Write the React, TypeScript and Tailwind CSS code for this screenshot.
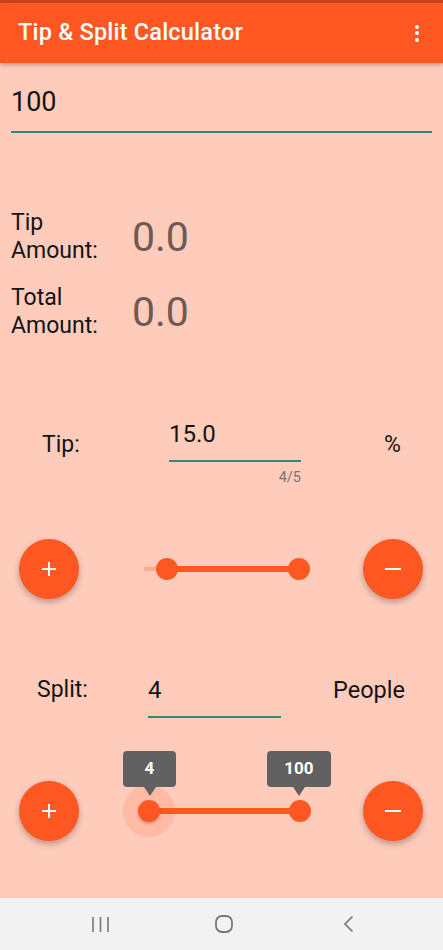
import React from "react";

function Fab({ kind }: { kind: "plus" | "minus" }) {
  return (
    <div className="w-[60px] h-[60px] rounded-full bg-[#ff5722] flex items-center justify-center shadow-[0_3px_6px_rgba(0,0,0,0.28)] shrink-0">
      <svg width="18" height="18" viewBox="0 0 18 18">
        {kind === "plus" ? (
          <path d="M9 2v14M2 9h14" stroke="white" strokeWidth="2" />
        ) : (
          <path d="M1 9h16" stroke="white" strokeWidth="2" />
        )}
      </svg>
    </div>
  );
}

function Tooltip({ text, width }: { text: string; width: number }) {
  return (
    <div className="flex flex-col items-center">
      <div
        className="h-[36px] rounded-[4px] bg-[#616161] text-white font-bold text-[17px] flex items-center justify-center"
        style={{ width }}
      >
        {text}
      </div>
      <div className="w-0 h-0 border-l-[6px] border-r-[6px] border-t-[9px] border-l-transparent border-r-transparent border-t-[#616161]" />
    </div>
  );
}

export default function App() {
  return (
    <div className="w-[443px] h-[950px] flex flex-col bg-[#ffccbc] font-['Roboto',sans-serif] text-[#141414]">
      <div className="h-[3px] bg-[#c8461c]" />
      <header className="h-[60px] bg-[#ff5722] shadow-[0_2px_4px_rgba(0,0,0,0.25)] flex items-center justify-between pl-[18px] pr-[24px] relative z-10">
        <span className="text-white text-[23.5px] font-medium tracking-[0.2px]">Tip &amp; Split Calculator</span>
        <div className="flex flex-col gap-[2.5px]">
          <div className="w-[4px] h-[4px] rounded-full bg-white" />
          <div className="w-[4px] h-[4px] rounded-full bg-white" />
          <div className="w-[4px] h-[4px] rounded-full bg-white" />
        </div>
      </header>

      <main className="flex-1 flex flex-col">
        <div className="mx-[11px] mt-[24px] pb-[14px] border-b-2 border-[#2a8c7a]">
          <div className="h-[30px] leading-[30px] text-[27px]">100</div>
        </div>

        <div className="mt-[76px] pl-[11px] flex items-center h-[56px]">
          <div className="w-[121px] text-[23px] leading-[28px]">
            Tip
            <br />
            Amount:
          </div>
          <div className="text-[41px] text-[#6d5a52] leading-none">0.0</div>
        </div>
        <div className="mt-[19px] pl-[11px] flex items-center h-[56px]">
          <div className="w-[121px] text-[23px] leading-[28px]">
            Total
            <br />
            Amount:
          </div>
          <div className="text-[41px] text-[#6d5a52] leading-none">0.0</div>
        </div>

        <div className="mt-[79px] pl-[42px] flex items-start">
          <div className="w-[127px] mt-[12px] text-[23px] leading-[28px]">Tip:</div>
          <div className="w-[132px] flex flex-col">
            <div className="pb-[11px] border-b-2 border-[#2a8c7a]">
              <div className="h-[30px] leading-[30px] text-[24px]">15.0</div>
            </div>
            <div className="mt-[8px] h-[16px] leading-[16px] text-[14.5px] text-[#7b726e] text-right">4/5</div>
          </div>
          <div className="ml-[83px] mt-[12px] text-[23px] leading-[28px]">%</div>
        </div>

        <div className="mt-[53px] pl-[19px] flex items-center h-[60px]">
          <Fab kind="plus" />
          <div className="relative w-[188px] h-[60px] ml-[54px]">
            <div className="absolute left-[11px] top-[28px] w-[24px] h-[4px] bg-[#ffab91]" />
            <div className="absolute left-[34px] top-[27px] w-[132px] h-[6px] bg-[#ff5722]" />
            <div className="absolute left-[23px] top-[19px] w-[22px] h-[22px] rounded-full bg-[#ff5722]" />
            <div className="absolute left-[155px] top-[19px] w-[22px] h-[22px] rounded-full bg-[#ff5722]" />
          </div>
          <div className="ml-[42px]">
            <Fab kind="minus" />
          </div>
        </div>

        <div className="mt-[77px] pl-[37px] flex items-start">
          <div className="w-[111px] text-[23px] leading-[28px]">Split:</div>
          <div className="w-[133px] pb-[11px] border-b-2 border-[#2a8c7a]">
            <div className="h-[30px] leading-[30px] text-[24px] -mt-[1px]">4</div>
          </div>
          <div className="ml-[52px] text-[23.5px] leading-[28px]">People</div>
        </div>

        <div className="mt-[63px] pl-[19px] flex items-center h-[60px]">
          <Fab kind="plus" />
          <div className="relative w-[188px] h-[60px] ml-[54px]">
            <div className="absolute left-[11px] top-[28px] w-[24px] h-[4px] bg-[#ffab91]" />
            <div className="absolute left-[16px] top-[27px] w-[151px] h-[6px] bg-[#ff5722]" />
            <div className="absolute left-[-10px] top-[4px] w-[52px] h-[52px] rounded-full bg-[#ff5722]/15" />
            <div className="absolute left-[5px] top-[19px] w-[22px] h-[22px] rounded-full bg-[#ff5722] shadow-[0_2px_3px_rgba(0,0,0,0.2)]" />
            <div className="absolute left-[156px] top-[19px] w-[22px] h-[22px] rounded-full bg-[#ff5722]" />
            <div className="absolute left-[-10px] top-[-30px]">
              <Tooltip text="4" width={53} />
            </div>
            <div className="absolute left-[134px] top-[-30px]">
              <Tooltip text="100" width={64} />
            </div>
          </div>
          <div className="ml-[42px]">
            <Fab kind="minus" />
          </div>
        </div>
      </main>

      <nav className="h-[52px] bg-[#f2f2f2] flex items-center">
        <svg className="ml-[92px]" width="17" height="17" viewBox="0 0 17 17">
          <path d="M1 1v15M8.5 1v15M16 1v15" stroke="#777" strokeWidth="1.6" />
        </svg>
        <svg className="ml-[106px]" width="18" height="18" viewBox="0 0 18 18">
          <rect x="1" y="1" width="16" height="16" rx="6" fill="none" stroke="#777" strokeWidth="1.8" />
        </svg>
        <svg className="ml-[110px]" width="11" height="18" viewBox="0 0 11 18">
          <path d="M9.5 1.5L2 9l7.5 7.5" fill="none" stroke="#777" strokeWidth="1.7" />
        </svg>
      </nav>
    </div>
  );
}
